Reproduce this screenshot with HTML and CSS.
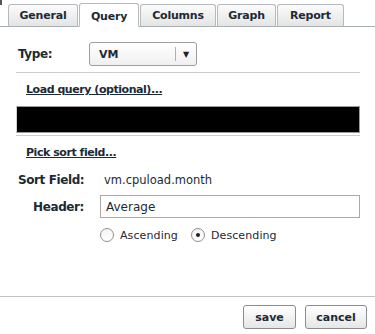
FILE: index.html
```html
<!DOCTYPE html>
<html>
<head>
<meta charset="utf-8">
<link rel="stylesheet" href="styles.css">
</head>
<body>
<div class="dialog">
  <div class="tabs">
    <div class="tab t-general">General</div>
    <div class="tab active t-query">Query</div>
    <div class="tab t-columns">Columns</div>
    <div class="tab t-graph">Graph</div>
    <div class="tab t-report">Report</div>
    <div class="tab-fill"></div>
  </div>
  <div class="content">
    <div class="type-row">
      <span class="label type-label">Type:</span>
      <div class="select">
        <span class="select-value">VM</span>
        <span class="select-sep"></span>
        <span class="select-arrow">▼</span>
      </div>
    </div>
    <div class="rule"></div>
    <a class="link load-link">Load query (optional)...</a>
    <div class="query-box"></div>
    <div class="rule rule2"></div>
    <a class="link pick-link">Pick sort field...</a>
    <div class="sort-row">
      <span class="label">Sort Field:</span>
      <span class="sort-value">vm.cpuload.month</span>
    </div>
    <div class="header-row">
      <span class="label header-label">Header:</span>
      <div class="text-input">Average</div>
    </div>
    <div class="radio-row">
      <span class="radio"></span><span class="radio-label">Ascending</span>
      <span class="radio checked"><span class="dot"></span></span><span class="radio-label">Descending</span>
    </div>
  </div>
  <div class="footer">
    <button class="btn">save</button>
    <button class="btn">cancel</button>
  </div>
</div>
</body>
</html>
```
FILE: styles.css
```css
* { box-sizing: border-box; }
html, body { margin: 0; padding: 0; background: #fff; }
body { width: 375px; height: 334px; overflow: hidden; font-family: "DejaVu Sans", Verdana, sans-serif; color: #1c2a36; }
.dialog { width: 375px; height: 334px; display: flex; flex-direction: column; position: relative; }
.tabs { display: flex; align-items: flex-end; height: 27px; padding-left: 8px; border-bottom: 1px solid #a9b0b3; }
.tabs::before { content: ""; position: absolute; left: 0; top: 0; width: 2px; height: 5px; background: #555; }
.tab { height: 23px; margin-bottom: -1px; border: 1px solid #b5b9bb; border-bottom-color: #a9b0b3; border-radius: 3px 3px 0 0; background: linear-gradient(#fbfbfb, #e4e4e4); font-weight: bold; font-size: 11px; color: #1c2a36; display: flex; align-items: center; justify-content: center; margin-right: 1px; letter-spacing: -0.2px; }
.tab.active { height: 24px; background: #fff; border-bottom-color: #fff; padding-top: 2px; }
.t-general { width: 70px; }
.t-query { width: 60px; }
.t-columns { width: 76px; }
.t-graph { width: 59px; }
.t-report { width: 67px; }
.content { flex: 1; padding: 0 15px 0 16px; display: flex; flex-direction: column; }
.label { font-weight: bold; font-size: 12px; color: #1c2a36; letter-spacing: -0.4px; }
.type-row { display: flex; align-items: center; height: 24px; margin-top: 15px; padding-left: 2px; }
.type-label { width: 71px; }
.select { width: 108px; height: 24px; border: 1px solid #9a9fa3; border-radius: 3px; background: linear-gradient(#fff, #f0f0f0); display: flex; align-items: center; }
.select-value { flex: 1; padding-left: 9px; font-weight: bold; font-size: 11px; color: #1c2a36; }
.select-sep { width: 1px; height: 14px; background: #b0b0b0; }
.select-arrow { width: 20px; text-align: center; font-size: 8px; color: #222; }
.rule { height: 1px; background: #c9cfd2; margin-top: 6px; }
.link { font-weight: bold; font-size: 11px; color: #1c2a36; text-decoration: underline; padding-left: 10px; letter-spacing: -0.45px; }
.load-link { margin-top: 10px; line-height: 14px; }
.query-box { height: 27px; margin-top: 9px; background: #000; border: 1px solid #9c9c9c; border-left-color: #d0d0d0; }
.rule2 { margin-top: 2px; }
.pick-link { margin-top: 10px; line-height: 14px; }
.sort-row { display: flex; align-items: center; margin-top: 12px; padding-left: 2px; height: 16px; }
.sort-row .label { width: 86px; }
.sort-value { font-size: 11.5px; color: #1c2a36; }
.header-row { display: flex; align-items: center; margin-top: 7px; height: 23px; }
.header-label { text-align: right; margin-right: 16px; width: 68px; }
.text-input { flex: 1; height: 23px; border: 1px solid #a9a9a9; padding-left: 5px; font-size: 12px; display: flex; align-items: center; color: #1c2a36; }
.radio-row { display: flex; align-items: center; margin-top: 9px; padding-left: 84px; height: 16px; }
.radio { width: 14px; height: 14px; border: 1px solid #8f8f8f; border-radius: 50%; background: linear-gradient(#f4f4f4, #fff); display: flex; align-items: center; justify-content: center; }
.radio .dot { width: 4px; height: 4px; border-radius: 50%; background: #222; }
.radio-label { font-size: 11px; margin-left: 6px; color: #1c2a36; letter-spacing: 0.1px; }
.radio.checked { margin-left: 13px; }
.footer { height: 38px; border-top: 1px solid #c2c2c2; display: flex; justify-content: flex-end; align-items: flex-start; padding: 8px 8px 0 0; gap: 9px; }
.btn { height: 24px; border: 1px solid #8c8c8c; border-radius: 3px; background: linear-gradient(#fff, #e6e6e6); font-family: "DejaVu Sans", Verdana, sans-serif; font-weight: bold; font-size: 11px; color: #1c2a36; padding: 0; }
.btn:first-child { width: 53px; }
.btn:last-child { width: 62px; }
```
